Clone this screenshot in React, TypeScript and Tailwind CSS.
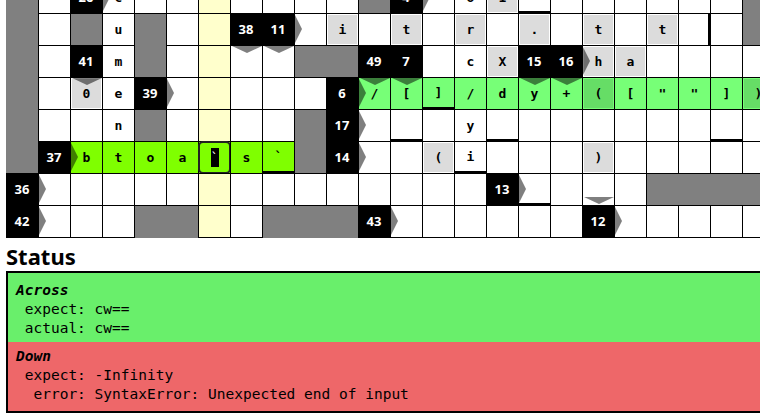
import React from "react";

type Kind = "gray" | "black" | "white" | "light" | "focus";
type Cell = {
  kind: Kind;
  text: string;
  right: boolean;
  down: boolean;
  up: boolean;
  tb: boolean;
  tr: boolean;
};

const ROWS: string[][] = [
  ["#", ".", "K26>", ".c", ".", ".", ".", ".", ".", ".", ".", "#", "K4>", ".", ".o", "L1", ".|b", ".", ".", ".", ".", ".", ".", "#"],
  ["#", ".", "#", ".u", "#", ".", ".", "K38v", "K11>v", ".", "Li", ".", "Lt", ".", "Lr", ".", "L.", ".", "Lt", ".", "Lt", ".|r", ".", "#"],
  ["#", ".", "K41v", ".m", "#", ".", ".", ".", ".", "#", "#", "K49v", "K7v", ".", ".c", "LX", "K15v", "K16>v", "Lh", "La", ".", ".", ".", "."],
  ["#", ".", "L0", ".e", "K39>", ".", ".", ".", ".", ".", "K6>", "./", ".[", ".]|b", "./", ".d", ".y", ".+", "L(", ".[", ".\"", ".\"", ".]", "L)"],
  ["#", ".", ".", ".n", "#", ".", ".", ".", ".", "#", "K17>", ".", ".|b", ".", ".y", ".|b", ".", ".", ".", ".", ".", ".", ".|b", "."],
  ["#", "K37>", ".b", ".t", ".o", ".a", "F`", ".s", ".`|b", "#", "K14>", ".", ".", "L(", ".i|b", ".", ".", ".", "L)", ".", ".", ".", ".", "."],
  ["K36>", ".", ".", ".", ".", ".", ".", ".", ".", ".", ".", ".", ".", ".", ".", "K13>", ".|b", ".", ".", ".", "#", "#", "#", "#"],
  ["K42>", ".", ".", ".", "#", "#", ".", ".", "#", "#", "#", "K43>", ".", ".", ".", ".", ".", ".", "K12>^", ".", ".", ".", ".", "."],
];

function parse(tok: string): Cell {
  const parts = tok.split("|");
  const base = parts[0];
  const mods = parts[1] || "";
  const c: Cell = {
    kind: "white",
    text: "",
    right: false,
    down: false,
    up: false,
    tb: mods.includes("b"),
    tr: mods.includes("r"),
  };
  if (base === "#") {
    c.kind = "gray";
  } else if (base[0] === "K") {
    const m = base.slice(1);
    c.kind = "black";
    c.text = m.replace(/[>v^]/g, "");
    c.right = m.includes(">");
    c.down = m.includes("v");
    c.up = m.includes("^");
  } else if (base[0] === "L") {
    c.kind = "light";
    c.text = base.slice(1);
  } else if (base[0] === "F") {
    c.kind = "focus";
    c.text = base.slice(1);
  } else {
    c.text = base.slice(1);
  }
  return c;
}

type Tone = "white" | "green" | "lime" | "yellow";

function toneFor(r: number, c: number): Tone {
  if (r === 3 && c >= 11) return "green";
  if (r === 5 && c >= 2 && c <= 8) return "lime";
  if (c === 6) return "yellow";
  return "white";
}

const BG: Record<Tone, string> = {
  white: "bg-white",
  green: "bg-[#77ff77]",
  lime: "bg-[#7fff00]",
  yellow: "bg-[#ffffcc]",
};

const INNER: Record<Tone, string> = {
  white: "bg-[#dcdcdc]",
  green: "bg-[#66dd66]",
  lime: "bg-[#70e000]",
  yellow: "bg-[#dcdcb0]",
};

function GridCell({ cell, tone }: { cell: Cell; tone: Tone }) {
  if (cell.kind === "gray") {
    return <div className="w-[33px] h-[33px] bg-[#808080]" />;
  }
  if (cell.kind === "black") {
    return (
      <div className="relative z-20 w-[33px] h-[33px] bg-black flex items-center justify-center text-white font-bold text-[13px] leading-none font-['Noto_Sans',sans-serif]">
        <span className="pr-px">{cell.text}</span>
        {cell.right && (
          <span className="absolute left-[33px] top-[2px] w-0 h-0 border-y-[14px] border-y-transparent border-l-[7px] border-l-[rgba(0,0,0,0.5)]" />
        )}
        {cell.down && (
          <span className="absolute top-[33px] left-[2px] w-0 h-0 border-x-[15px] border-x-transparent border-t-[7px] border-t-[rgba(0,0,0,0.5)]" />
        )}
        {cell.up && (
          <span className="absolute top-[-8px] left-[2px] w-0 h-0 border-x-[15px] border-x-transparent border-t-[7px] border-t-[rgba(0,0,0,0.5)]" />
        )}
      </div>
    );
  }
  const thick = (cell.tb ? " border-b-[3px]" : "") + (cell.tr ? " border-r-[3px]" : "");
  const letter = "font-['DejaVu_Sans_Mono',monospace] font-bold text-[13px] leading-none text-black";
  if (cell.kind === "light") {
    return (
      <div className={"relative z-10 w-[33px] h-[33px] border border-black flex p-px " + BG[tone] + thick}>
        <div className={"flex-1 flex items-center justify-center " + INNER[tone] + " " + letter}>{cell.text}</div>
      </div>
    );
  }
  if (cell.kind === "focus") {
    return (
      <div className={"relative z-10 w-[33px] h-[33px] border border-black flex " + BG[tone] + thick}>
        <div className="flex-1 -m-px rounded-[5px] border-2 border-[#222] flex items-center justify-center">
          <span className="inline-block w-[8px] h-[19px] bg-black text-white overflow-hidden font-['DejaVu_Sans_Mono',monospace] text-[13px] leading-[19px] text-left">
            {cell.text}
          </span>
        </div>
      </div>
    );
  }
  return (
    <div className={"relative z-10 w-[33px] h-[33px] border border-black flex items-center justify-center " + BG[tone] + thick + " " + letter}>
      {cell.text}
    </div>
  );
}

export default function App() {
  return (
    <div className="w-[760px] h-[417px] overflow-hidden bg-white">
      <div className="ml-[6px] -mt-[19px] grid grid-cols-[repeat(24,32px)] auto-rows-[32px] w-[768px]">
        {ROWS.map((row, r) =>
          row.map((tok, c) => <GridCell key={r + "-" + c} cell={parse(tok)} tone={toneFor(r, c)} />)
        )}
      </div>
      <div className="pl-[6px] pt-[5px]">
        <h2 className="text-[22px] font-bold leading-[28px] text-black font-['Noto_Sans',sans-serif]">Status</h2>
        <div className="mt-px w-[820px] border-2 border-black font-['DejaVu_Sans_Mono',monospace] text-[14.5px] leading-[19px] text-black">
          <div className="bg-[#69ef6b] pt-[8px] pb-[4px] pl-[8px] whitespace-pre">
            <div className="font-bold italic">Across</div>
            <div>{" expect: cw=="}</div>
            <div>{" actual: cw=="}</div>
          </div>
          <div className="bg-[#ee6769] pt-[5px] pb-[7px] pl-[8px] whitespace-pre">
            <div className="font-bold italic">Down</div>
            <div>{" expect: -Infinity"}</div>
            <div>{"  error: SyntaxError: Unexpected end of input"}</div>
          </div>
        </div>
      </div>
    </div>
  );
}
